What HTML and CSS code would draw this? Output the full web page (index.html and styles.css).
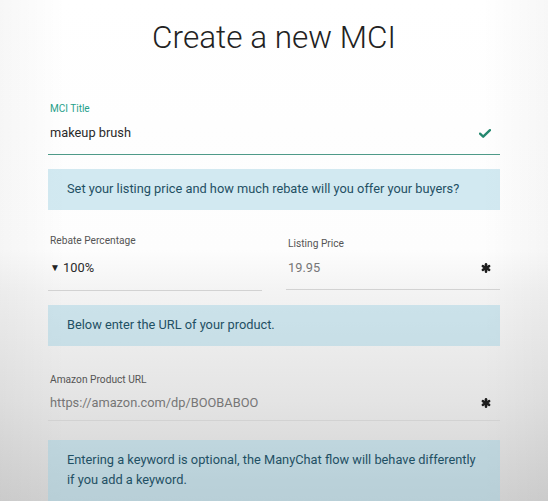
FILE: index.html
```html
<!DOCTYPE html>
<html lang="en">
<head>
<meta charset="utf-8">
<title>Create a new MCI</title>
<link rel="stylesheet" href="styles.css">
</head>
<body>
<main class="page">
  <h1 class="title">Create a new MCI</h1>

  <div class="field field-valid">
    <label class="label label-active">MCI Title</label>
    <div class="control">
      <span class="value value-dark">makeup brush</span>
      <svg class="icon icon-check" viewBox="0 0 16 12" width="12" height="9" aria-hidden="true">
        <path d="M1.4 6.2 L5.6 10.2 L14.6 1.6" fill="none" stroke="currentColor" stroke-width="3.2" stroke-linecap="round" stroke-linejoin="round"/>
      </svg>
    </div>
  </div>

  <div class="note note-first">Set your listing price and how much rebate will you offer your buyers?</div>

  <div class="row">
    <div class="field field-plain">
      <label class="label">Rebate Percentage</label>
      <div class="control">
        <span class="value value-dark"><span class="caret">▼</span> 100%</span>
      </div>
    </div>
    <div class="field field-plain">
      <label class="label label-low">Listing Price</label>
      <div class="control control-low">
        <span class="value value-muted">19.95</span>
        <svg class="icon icon-req" viewBox="0 0 12 12" width="10" height="10" aria-hidden="true">
          <g stroke="currentColor" stroke-width="3" stroke-linecap="round">
            <line x1="6" y1="1.6" x2="6" y2="10.4"/>
            <line x1="2.2" y1="3.8" x2="9.8" y2="8.2"/>
            <line x1="2.2" y1="8.2" x2="9.8" y2="3.8"/>
          </g>
        </svg>
      </div>
    </div>
  </div>

  <div class="note note-second">Below enter the URL of your product.</div>

  <div class="field field-plain field-url">
    <label class="label">Amazon Product URL</label>
    <div class="control control-tight">
      <span class="value value-muted">https://amazon.com/dp/BOOBABOO</span>
      <svg class="icon icon-req" viewBox="0 0 12 12" width="10" height="10" aria-hidden="true">
        <g stroke="currentColor" stroke-width="3" stroke-linecap="round">
          <line x1="6" y1="1.6" x2="6" y2="10.4"/>
          <line x1="2.2" y1="3.8" x2="9.8" y2="8.2"/>
          <line x1="2.2" y1="8.2" x2="9.8" y2="3.8"/>
        </g>
      </svg>
    </div>
  </div>

  <div class="note note-third">Entering a keyword is optional, the ManyChat flow will behave differently if you add a keyword.</div>
</main>
</body>
</html>
```
FILE: styles.css
```css
html, body {
  margin: 0;
  padding: 0;
  height: 100%;
}

body {
  font-family: Roboto, "Liberation Sans", Arial, sans-serif;
  color: #333;
  background:
    linear-gradient(to right, rgba(0,0,0,0.03), rgba(0,0,0,0) 12%, rgba(0,0,0,0) 88%, rgba(0,0,0,0.03)),
    linear-gradient(to bottom, #ffffff 0, #fdfdfd 250px, #f3f3f3 292px, #e4e4e4 400px, #d1d1d1 501px);
  overflow: hidden;
}

.page {
  padding: 18px 48px 0 48px;
  display: flex;
  flex-direction: column;
}

.title {
  margin: 0;
  font-weight: 300;
  font-size: 31.5px;
  line-height: 40px;
  text-align: center;
  color: #222;
}

.field {
  display: flex;
  flex-direction: column;
}

.field-valid {
  margin-top: 45px;
}

.label {
  font-size: 10px;
  line-height: 12px;
  color: #555;
  padding-left: 2px;
}

.label-active {
  color: #26a08a;
}

.control {
  display: flex;
  align-items: center;
  justify-content: space-between;
  padding: 0 9px 11px 2px;
  margin-top: 8px;
  border-bottom: 1px solid #d2d2d2;
}

.field-valid .control {
  border-bottom-color: #4e9a88;
}

.value {
  font-size: 12.8px;
  line-height: 20px;
}

.value-dark {
  color: #2a2a2a;
}

.value-muted {
  color: #767676;
}

.caret {
  font-size: 10px;
  position: relative;
  top: -1px;
  color: #222;
}

.icon {
  flex: none;
  display: block;
}

.icon-check {
  color: #24886f;
}

.icon-req {
  color: #1e1e1e;
}

.note {
  background: rgba(150, 205, 225, 0.42);
  color: #1f5064;
  font-size: 12.8px;
  line-height: 20px;
  padding: 10px 20px 11px 19px;
}

.note-first {
  margin-top: 14px;
}

.row {
  display: grid;
  grid-template-columns: 1fr 1fr;
  column-gap: 24px;
  margin-top: 24px;
}

.row .label {
  font-size: 10.2px;
  line-height: 13px;
}

.row .control {
  margin-top: 11px;
}

.label-low {
  margin-top: 3px;
}

.row .control-low {
  margin-top: 8px;
}

.note-second {
  margin-top: 14px;
}

.field-url {
  margin-top: 27px;
}

.field-url .label {
  font-size: 10.2px;
  line-height: 13px;
}

.control-tight {
  margin-top: 7px;
  padding-bottom: 7px;
}

.note-third {
  margin-top: 19px;
  padding-top: 10px;
  padding-bottom: 40px;
}
```
